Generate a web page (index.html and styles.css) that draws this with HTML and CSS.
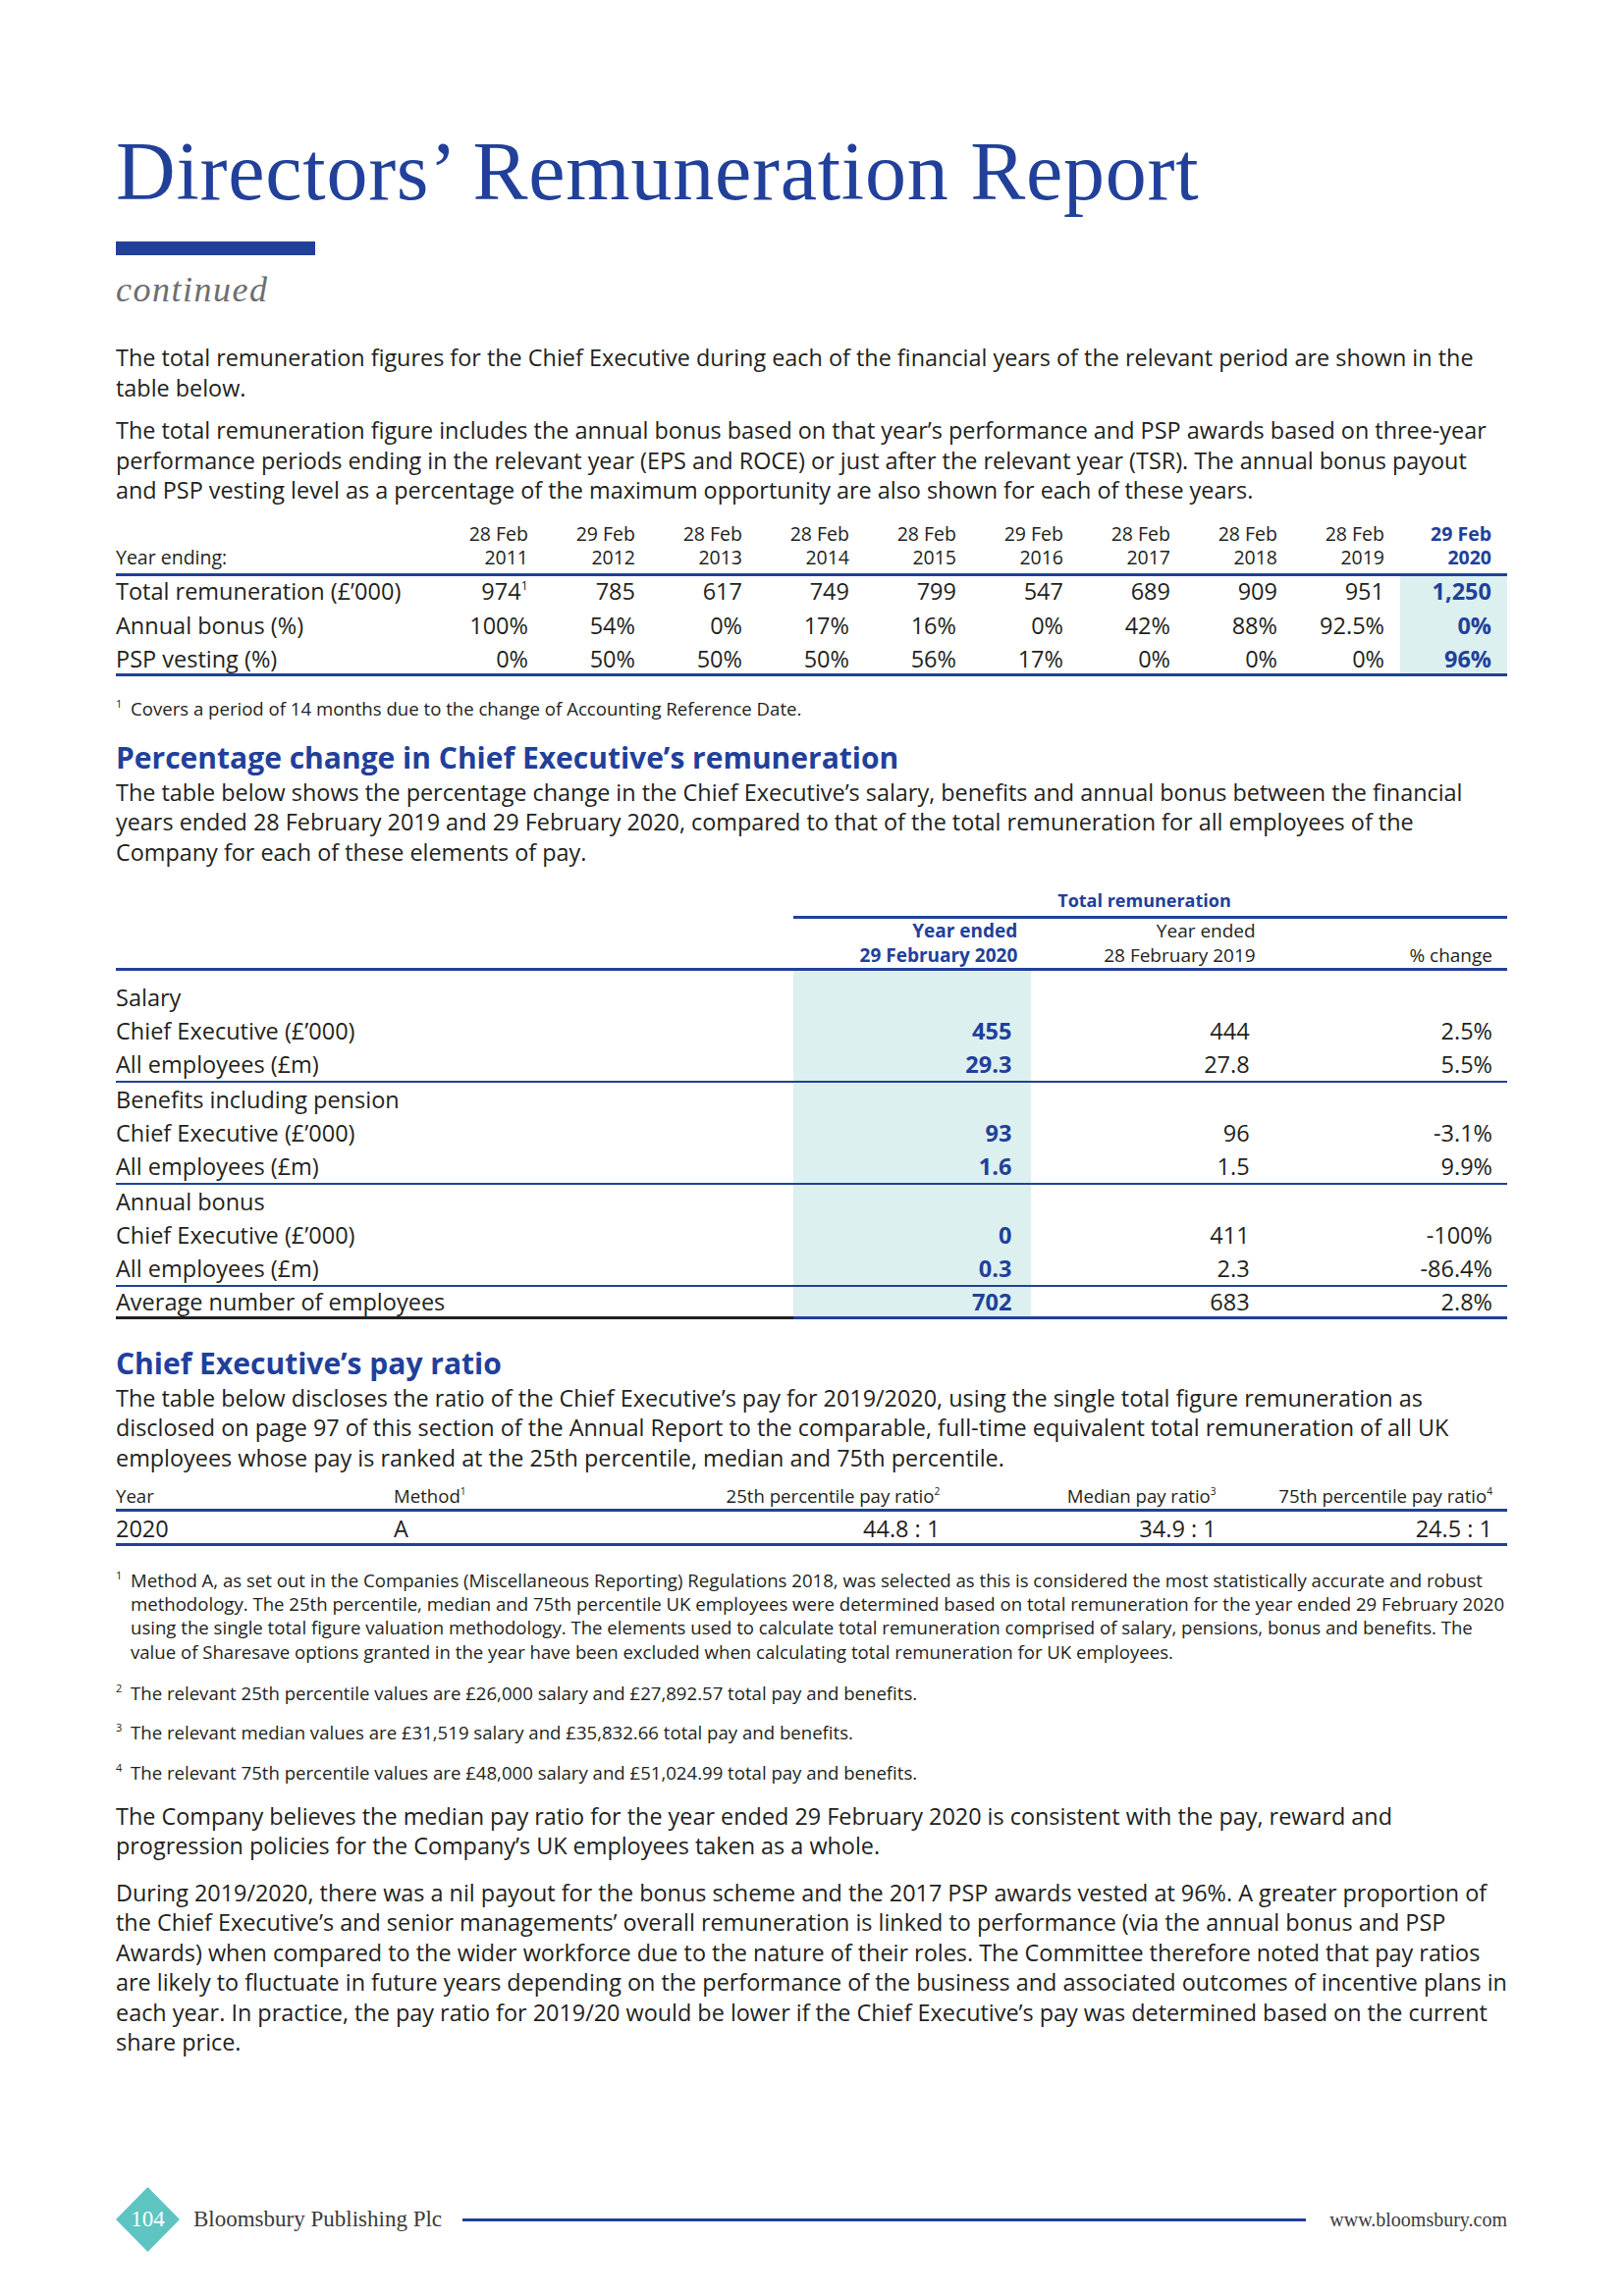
FILE: index.html
```html
<!DOCTYPE html>
<html lang="en">
<head>
<meta charset="utf-8">
<title>Directors’ Remuneration Report</title>
<link rel="stylesheet" href="styles.css">
</head>
<body>
<div class="page">
  <header class="masthead">
    <h1 class="title">Directors’ Remuneration Report</h1>
    <div class="title-bar"></div>
    <p class="continued">continued</p>
  </header>

  <p class="body p1">The total remuneration figures for the Chief Executive during each of the financial years of the relevant period are shown in the table below.</p>
  <p class="body p2">The total remuneration figure includes the annual bonus based on that year’s performance and PSP awards based on three-year performance periods ending in the relevant year (EPS and ROCE) or just after the relevant year (TSR). The annual bonus payout and PSP vesting level as a percentage of the maximum opportunity are also shown for each of these years.</p>

  <table class="t-hist">
    <thead>
      <tr>
        <th class="lbl">Year ending:</th>
        <th>28 Feb<br>2011</th>
        <th>29 Feb<br>2012</th>
        <th>28 Feb<br>2013</th>
        <th>28 Feb<br>2014</th>
        <th>28 Feb<br>2015</th>
        <th>29 Feb<br>2016</th>
        <th>28 Feb<br>2017</th>
        <th>28 Feb<br>2018</th>
        <th>28 Feb<br>2019</th>
        <th class="cur">29 Feb<br>2020</th>
      </tr>
    </thead>
    <tbody>
      <tr>
        <td class="lbl">Total remuneration (£’000)</td>
        <td>974<sup>1</sup></td><td>785</td><td>617</td><td>749</td><td>799</td><td>547</td><td>689</td><td>909</td><td>951</td><td class="cur">1,250</td>
      </tr>
      <tr>
        <td class="lbl">Annual bonus (%)</td>
        <td>100%</td><td>54%</td><td>0%</td><td>17%</td><td>16%</td><td>0%</td><td>42%</td><td>88%</td><td>92.5%</td><td class="cur">0%</td>
      </tr>
      <tr class="last">
        <td class="lbl">PSP vesting (%)</td>
        <td>0%</td><td>50%</td><td>50%</td><td>50%</td><td>56%</td><td>17%</td><td>0%</td><td>0%</td><td>0%</td><td class="cur">96%</td>
      </tr>
    </tbody>
  </table>

  <p class="fn fn-first"><span class="fn-mark">1</span><span class="fn-text">Covers a period of 14 months due to the change of Accounting Reference Date.</span></p>

  <h2 class="section-title st-1">Percentage change in Chief Executive’s remuneration</h2>
  <p class="body after-title">The table below shows the percentage change in the Chief Executive’s salary, benefits and annual bonus between the financial years ended 28 February 2019 and 29 February 2020, compared to that of the total remuneration for all employees of the Company for each of these elements of pay.</p>

  <table class="t-change">
    <thead>
      <tr class="group-head">
        <th class="lbl"></th>
        <th colspan="3" class="span-head">Total remuneration</th>
      </tr>
      <tr class="col-head">
        <th class="lbl"></th>
        <th class="cur">Year ended<br>29 February 2020</th>
        <th class="prev">Year ended<br>28 February 2019</th>
        <th class="pct">% change</th>
      </tr>
    </thead>
    <tbody>
      <tr class="grp first-grp"><td class="lbl">Salary</td><td class="cur"></td><td></td><td></td></tr>
      <tr><td class="lbl">Chief Executive (£’000)</td><td class="cur">455</td><td class="prev">444</td><td class="pct">2.5%</td></tr>
      <tr class="end"><td class="lbl">All employees (£m)</td><td class="cur">29.3</td><td class="prev">27.8</td><td class="pct">5.5%</td></tr>
      <tr class="grp"><td class="lbl">Benefits including pension</td><td class="cur"></td><td></td><td></td></tr>
      <tr><td class="lbl">Chief Executive (£’000)</td><td class="cur">93</td><td class="prev">96</td><td class="pct">-3.1%</td></tr>
      <tr class="end"><td class="lbl">All employees (£m)</td><td class="cur">1.6</td><td class="prev">1.5</td><td class="pct">9.9%</td></tr>
      <tr class="grp"><td class="lbl">Annual bonus</td><td class="cur"></td><td></td><td></td></tr>
      <tr><td class="lbl">Chief Executive (£’000)</td><td class="cur">0</td><td class="prev">411</td><td class="pct">-100%</td></tr>
      <tr class="end"><td class="lbl">All employees (£m)</td><td class="cur">0.3</td><td class="prev">2.3</td><td class="pct">-86.4%</td></tr>
      <tr class="total"><td class="lbl">Average number of employees</td><td class="cur">702</td><td class="prev">683</td><td class="pct">2.8%</td></tr>
    </tbody>
  </table>

  <h2 class="section-title st-2">Chief Executive’s pay ratio</h2>
  <p class="body after-title">The table below discloses the ratio of the Chief Executive’s pay for 2019/2020, using the single total figure remuneration as disclosed on page 97 of this section of the Annual Report to the comparable, full-time equivalent total remuneration of all UK employees whose pay is ranked at the 25th percentile, median and 75th percentile.</p>

  <table class="t-ratio">
    <thead>
      <tr>
        <th class="c-year">Year</th>
        <th class="c-method">Method<sup>1</sup></th>
        <th class="c-num">25th percentile pay ratio<sup>2</sup></th>
        <th class="c-num">Median pay ratio<sup>3</sup></th>
        <th class="c-num">75th percentile pay ratio<sup>4</sup></th>
      </tr>
    </thead>
    <tbody>
      <tr>
        <td class="c-year">2020</td>
        <td class="c-method">A</td>
        <td class="c-num">44.8 : 1</td>
        <td class="c-num">34.9 : 1</td>
        <td class="c-num">24.5 : 1</td>
      </tr>
    </tbody>
  </table>

  <p class="fn fn-ratio"><span class="fn-mark">1</span><span class="fn-text">Method A, as set out in the Companies (Miscellaneous Reporting) Regulations 2018, was selected as this is considered the most statistically accurate and robust methodology. The 25th percentile, median and 75th percentile UK employees were determined based on total remuneration for the year ended 29 February 2020 using the single total figure valuation methodology. The elements used to calculate total remuneration comprised of salary, pensions, bonus and benefits. The value of Sharesave options granted in the year have been excluded when calculating total remuneration for UK employees.</span></p>
  <p class="fn fn-2"><span class="fn-mark">2</span><span class="fn-text">The relevant 25th percentile values are £26,000 salary and £27,892.57 total pay and benefits.</span></p>
  <p class="fn"><span class="fn-mark">3</span><span class="fn-text">The relevant median values are £31,519 salary and £35,832.66 total pay and benefits.</span></p>
  <p class="fn"><span class="fn-mark">4</span><span class="fn-text">The relevant 75th percentile values are £48,000 salary and £51,024.99 total pay and benefits.</span></p>

  <p class="body p-company">The Company believes the median pay ratio for the year ended 29 February 2020 is consistent with the pay, reward and progression policies for the Company’s UK employees taken as a whole.</p>
  <p class="body p-during">During 2019/2020, there was a nil payout for the bonus scheme and the 2017 PSP awards vested at 96%. A greater proportion of the Chief Executive’s and senior managements’ overall remuneration is linked to performance (via the annual bonus and PSP Awards) when compared to the wider workforce due to the nature of their roles. The Committee therefore noted that pay ratios are likely to fluctuate in future years depending on the performance of the business and associated outcomes of incentive plans in each year. In practice, the pay ratio for 2019/20 would be lower if the Chief Executive’s pay was determined based on the current share price.</p>

  <footer class="footer">
    <div class="page-badge">
      <svg class="diamond" width="65" height="66" viewBox="0 0 65 66" aria-hidden="true">
        <polygon points="32.5,0 65,33 32.5,66 0,33" fill="#5ec4c1"/>
      </svg>
      <span class="page-num">104</span>
    </div>
    <span class="company">Bloomsbury Publishing Plc</span>
    <span class="footer-rule"></span>
    <span class="url">www.bloomsbury.com</span>
  </footer>
</div>
</body>
</html>
```

FILE: styles.css
```css
* { box-sizing: border-box; }

html, body {
  margin: 0;
  padding: 0;
  background: #ffffff;
}

body {
  font-family: "Open Sans", Lato, "Liberation Sans", sans-serif;
  color: #231f20;
}

.page {
  width: 1654px;
  min-height: 2339px;
  padding: 133px 119px 45px 118px;
  display: flex;
  flex-direction: column;
}

/* ---------- masthead ---------- */
.title {
  margin: 0;
  font-family: "Liberation Serif", "Times New Roman", serif;
  font-weight: 400;
  font-size: 84px;
  line-height: 84px;
  letter-spacing: 0.75px;
  color: #21409a;
}

.title-bar {
  width: 203px;
  height: 14px;
  margin-top: 29px;
  background: #21409a;
}

.continued {
  margin: 17px 0 0;
  font-family: "Liberation Serif", "Times New Roman", serif;
  font-style: italic;
  font-size: 36px;
  line-height: 36px;
  letter-spacing: 1.5px;
  color: #6d6e71;
}

/* ---------- body text ---------- */
.body {
  margin: 0;
  font-size: 23.4px;
  line-height: 30.5px;
  font-weight: 400;
}

.p1 { margin-top: 36px; }
.p2 { margin-top: 13px; }
.after-title { margin-top: 3px; }
.p-company { margin-top: 17px; }
.p-during { margin-top: 17px; }

.section-title {
  margin: 0;
  font-size: 30px;
  line-height: 34px;
  font-weight: 700;
  color: #21409a;
}
.st-1 { margin-top: 20.5px; }
.st-2 { margin-top: 27.5px; }

/* ---------- footnotes ---------- */
.fn {
  margin: 16px 0 0;
  display: grid;
  grid-template-columns: 15px 1fr;
  font-size: 18.6px;
  line-height: 24.3px;
}
.fn-first { margin-top: 21px; }
.fn-ratio { margin-top: 23px; }
.fn-2 { margin-top: 18px; }
.fn-mark {
  font-size: 11px;
  line-height: 14px;
}

sup {
  font-size: 0.55em;
  line-height: 0;
  vertical-align: 0.75em;
}

/* ---------- tables (shared) ---------- */
table {
  border-collapse: collapse;
  width: 1417px;
  table-layout: fixed;
}
th, td { padding: 0; }

/* ---------- history table ---------- */
.t-hist { margin-top: 17.5px; }
.t-hist th {
  font-size: 19.5px;
  line-height: 24px;
  font-weight: 400;
  text-align: right;
  vertical-align: bottom;
  padding: 0 16px 4px 0;
  border-bottom: 3px solid #21409a;
  width: 109px;
}
.t-hist th.lbl {
  width: 327px;
  text-align: left;
}
.t-hist th.cur {
  font-weight: 700;
  color: #21409a;
}
.t-hist td {
  font-size: 23.5px;
  line-height: 30px;
  text-align: right;
  padding: 0 16px 4.5px 0;
  white-space: nowrap;
}
.t-hist td.lbl { text-align: left; }
.t-hist td.cur {
  background: #dcf0ef;
  color: #21409a;
  font-weight: 700;
}
.t-hist tr.last td {
  padding-bottom: 0;
  border-bottom: 3px solid #21409a;
}

/* ---------- change table ---------- */
.t-change { margin-top: 22px; }
.t-change th {
  font-size: 19px;
  font-weight: 400;
  text-align: right;
  vertical-align: bottom;
}
.t-change th.lbl { width: 690px; }
.t-change .group-head th {
  line-height: 24px;
  padding-bottom: 3.5px;
}
.t-change .group-head th.span-head {
  text-align: center;
  padding-right: 12px;
  font-size: 18px;
  font-weight: 700;
  color: #21409a;
  border-bottom: 3px solid #21409a;
}
.t-change .col-head th {
  line-height: 25px;
  border-bottom: 3px solid #21409a;
  width: 241px;
  padding-right: 14px;
}
.t-change .col-head th.lbl { width: 690px; padding: 0; }
.t-change .col-head th.pct { width: 245px; padding-right: 15px; }
.t-change .col-head th.cur {
  font-weight: 700;
  color: #21409a;
}
.t-change td {
  font-size: 23.5px;
  line-height: 34px;
  text-align: right;
  padding-right: 20px;
  white-space: nowrap;
}
.t-change td.lbl { text-align: left; padding: 0; }
.t-change td.pct { padding-right: 15px; }
.t-change td.cur {
  background: #dcf0ef;
  color: #21409a;
  font-weight: 700;
}
.t-change tr.first-grp td { padding-top: 10.5px; }
.t-change tr.end td { border-bottom: 2px solid #21409a; }
.t-change tr.total td {
  line-height: 30px;
  border-bottom: 3px solid #21409a;
}
.t-change tr.total td.lbl { border-bottom-color: #231f20; }

/* ---------- ratio table ---------- */
.t-ratio { margin-top: 11.5px; }
.t-ratio th {
  font-size: 18.6px;
  line-height: 24px;
  font-weight: 400;
  padding-bottom: 1.5px;
  border-bottom: 3px solid #21409a;
}
.t-ratio td {
  font-size: 23.5px;
  line-height: 30px;
  padding-top: 1.5px;
  border-bottom: 3px solid #21409a;
}
.t-ratio .c-year { width: 283px; text-align: left; }
.t-ratio .c-method { width: 290px; text-align: left; }
.t-ratio .c-num { text-align: right; padding-right: 15px; }

/* ---------- footer ---------- */
.footer {
  margin-top: auto;
  display: flex;
  align-items: center;
  height: 66px;
  font-family: "Liberation Serif", "Times New Roman", serif;
  color: #3a3a3a;
}
.page-badge {
  position: relative;
  width: 65px;
  height: 66px;
  flex: none;
}
.diamond { display: block; }
.page-num {
  position: absolute;
  inset: 0;
  display: flex;
  align-items: center;
  justify-content: center;
  color: #ffffff;
  font-size: 23px;
}
.company {
  margin-left: 14px;
  font-size: 23px;
}
.footer-rule {
  flex: 1;
  height: 3px;
  margin: 0 24px 0 21px;
  background: #21409a;
}
.url {
  font-size: 20px;
}
```
